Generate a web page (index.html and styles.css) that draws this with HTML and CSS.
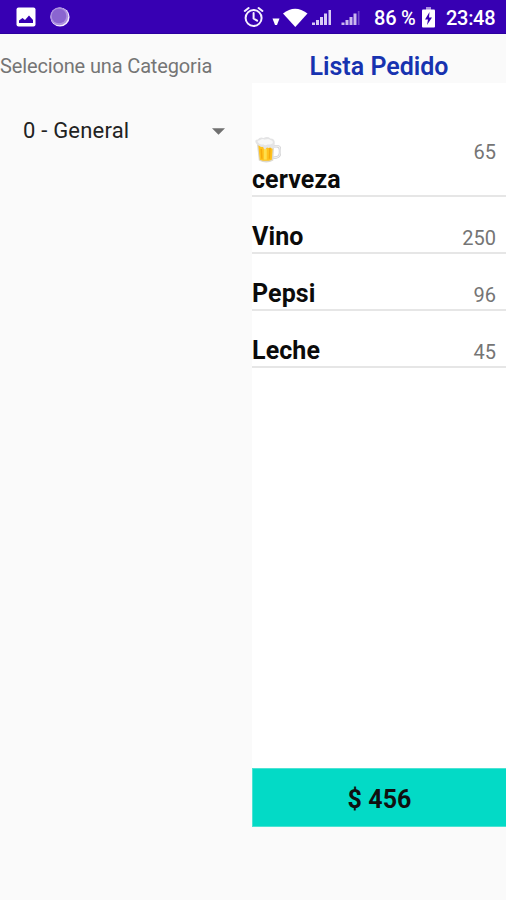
FILE: index.html
```html
<!DOCTYPE html>
<html lang="es">
<head>
<meta charset="utf-8">
<title>Lista Pedido</title>
<link rel="stylesheet" href="styles.css">
</head>
<body>
<header class="status">
  <svg class="photo" width="20" height="20" viewBox="0 0 20 20"><rect x=".5" y=".5" width="19" height="19" rx="2" fill="#fff"/><path d="M3 16v-2.500l3.500-2.500 2.500 2 4-4.500 4 4.500v3z" fill="#3700b3"/></svg>
  <svg class="orb" width="20" height="20" viewBox="0 0 20 20"><circle cx="10" cy="10" r="9.600" fill="#f5eeff"/><circle cx="9.300" cy="9.300" r="9" fill="#ad91e0"/><circle cx="9" cy="9" r="7.300" fill="#8a65d0"/></svg>
  <svg class="signals" width="120" height="24" viewBox="0 0 120 24">
    <g fill="none" stroke="#f5efff" stroke-width="2" stroke-linecap="round"><circle cx="10.600" cy="13" r="8"/><path d="M10.600 8v5.500l3.500 2.200M1.800 6l3.800-3M19.400 6l-3.800-3"/></g>
    <path d="M29.500 13.500h7L34 20h-2z" fill="#fff"/>
    <path d="M40 8.500Q52 -1 64.500 8.500L52.300 22z" fill="#fff"/>
    <path d="M69 20v-2.500h3V20zM73 20v-5h3v5zM77 20v-8h3v8zM81 20V8.500h3V20zM85.500 20V5H88v15z" fill="#d9cbf5"/>
    <path d="M98.500 20v-2.500h3V20zM102.500 20v-5h3v5zM106.500 20v-8h3v8zM110.500 20V8.500h3V20z" fill="#cbb8ef"/><path d="M114.800 20V6h1.700v14z" fill="#7047c8"/>
  </svg>
  <span class="percent">86 %</span>
  <svg class="battery" width="13" height="21" viewBox="0 0 13 21"><path d="M4 0h5v3H4z" fill="#a98de0"/><rect y="2.500" width="13" height="18" rx="1" fill="#fff"/><path d="M7.500 5L3 12.500h3L5 18l5-7.500H7z" fill="#3700b3"/></svg>
  <time class="clock">23:48</time>
</header>
<main class="columns">
  <section class="category">
    <div class="label">Selecione una Categoria</div>
    <div class="spinner"><span>0 - General</span><svg width="13" height="7" viewBox="0 0 14 7"><path d="M0 0h14L7 7z" fill="#707070"/></svg></div>
  </section>
  <section class="order">
    <h1 class="title">Lista Pedido</h1>
    <ul class="list">
      <li class="item beer">
        <div class="name">
          <svg class="mug" width="27" height="28" viewBox="0 0 28 28">
            <path d="M20 10h4q3 0 3 4v3q0 5-7 5" fill="none" stroke="#d0d0d2" stroke-width="2.600"/>
            <path d="M20 10h4q3 0 3 4v3q0 5-7 5" fill="none" stroke="#f1f1f2" stroke-width="1.100"/>
            <path d="M3 7h18l-1 18q-7 4-15 0z" fill="#dcd9cf"/>
            <path d="M4.500 9h15l-1 15q-6 2.500-12.500 0z" fill="#ffc21c"/>
            <path d="M7.500 13l.7 10M16.500 12l-.5 11" stroke="#f6a90b" stroke-width="1.500"/><path d="M11.700 13v11" stroke="#ffdf4c" stroke-width="3"/>
            <path d="M2 7Q0 3 4 3q2-3 6-1.500Q14-.5 17 2q5 0 4.500 5l-.8 5q-2 1.500-3.700-.5-2 1-3.500 0l-2 2q-2-1-2-3-2 1-4-1Q3 9 2 7z" fill="#e4e4e5"/>
            <path d="M4 6Q3 4 6 4q3-2.500 5-.8 4-1.500 6 .3 3 .5 2.500 3.500-3 2-5 1-3 2-5 0-3 1-5.500-2z" fill="#f7f7f7"/>
          </svg>
          <div>cerveza</div>
        </div>
        <span class="price">65</span>
      </li>
      <li class="item"><div class="name">Vino</div><span class="price">250</span></li>
      <li class="item"><div class="name">Pepsi</div><span class="price">96</span></li>
      <li class="item"><div class="name">Leche</div><span class="price">45</span></li>
    </ul>
    <div class="total">$ 456</div>
  </section>
</main>
</body>
</html>
```
FILE: styles.css
```css
* { box-sizing: border-box; }
body { margin: 0; height: 900px; background: #fafafa; font-family: Roboto, sans-serif; overflow: hidden; }
svg { display: block; flex: none; }
.status { display: flex; height: 34px; padding-top: 7px; background: #3700b3; border-bottom: 1px solid #2b009f; color: #fff; font-size: 20px; font-weight: 500; line-height: 23px; white-space: nowrap; }
.photo { margin-left: 16px; }
.orb { margin-left: 14px; }
.signals { margin: -2px 0 0 173px; }
.percent { width: 44px; margin-left: 11px; letter-spacing: -.2px; }
.battery { margin-left: 4px; }
.clock { margin-left: 11px; letter-spacing: -.3px; }
.columns { display: flex; height: 866px; }
.category { width: 252px; padding-top: 20px; }
.label { font-size: 20px; line-height: 24px; letter-spacing: -.14px; color: #757575; white-space: nowrap; }
.spinner { display: flex; align-items: center; justify-content: space-between; margin-top: 39px; padding: 0 27px 0 23px; font-size: 22px; line-height: 28px; letter-spacing: .2px; color: #222; }
.order { width: 254px; display: flex; flex-direction: column; }
.title { margin: 0; height: 49px; padding-top: 19px; text-align: center; font-size: 25px; font-weight: 600; line-height: 28px; color: #1733b0; }
.list { height: 685px; margin: 0; padding: 0; list-style: none; background: #fff; }
.item { display: flex; justify-content: space-between; align-items: baseline; height: 57px; padding: 26px 10px 0 0; border-bottom: 2px solid #e6e6e6; }
.name { font-size: 25px; font-weight: 700; line-height: 28px; letter-spacing: .1px; color: #0b0b0b; }
.price { font-size: 20px; line-height: 24px; color: #757575; }
.beer { height: 114px; padding-top: 53px; align-items: flex-start; }
.beer .price { margin-top: 4px; }
.mug { margin: 0 0 2px 2px; }
.total { height: 59px; border: 1px solid #4be3d3; border-right: 0; background: #03dac6; text-align: center; font-size: 25px; font-weight: 700; line-height: 61px; letter-spacing: .1px; color: #101010; }
```
